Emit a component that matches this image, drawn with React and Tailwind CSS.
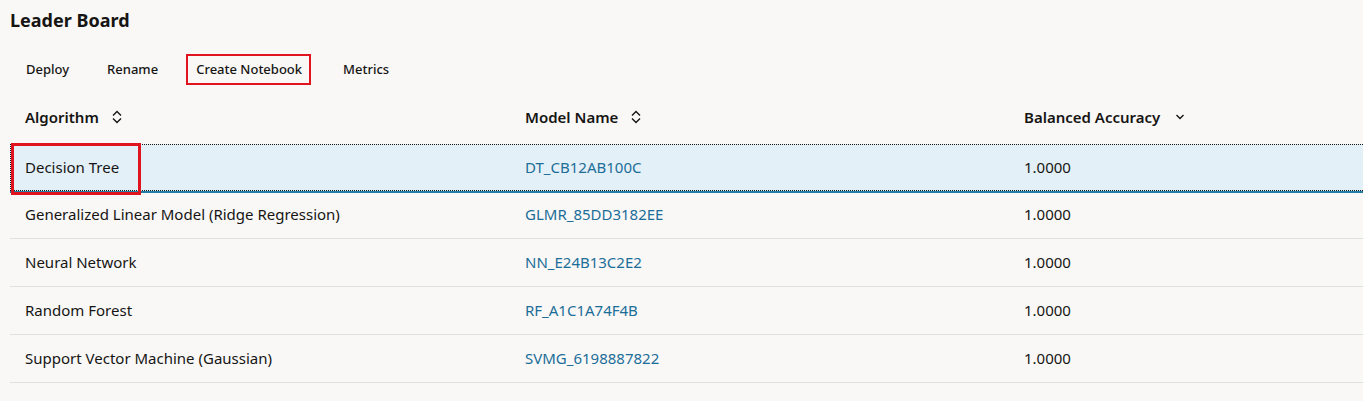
import React from "react";

const rows = [
  ["Decision Tree", "DT_CB12AB100C", "1.0000"],
  ["Generalized Linear Model (Ridge Regression)", "GLMR_85DD3182EE", "1.0000"],
  ["Neural Network", "NN_E24B13C2E2", "1.0000"],
  ["Random Forest", "RF_A1C1A74F4B", "1.0000"],
  ["Support Vector Machine (Gaussian)", "SVMG_6198887822", "1.0000"],
];

function UpDown() {
  return (
    <svg width="12" height="14" viewBox="0 0 12 14" fill="none" stroke="#161513" strokeWidth="1.4">
      <path d="M2 5.5 L6 1.5 L10 5.5" />
      <path d="M2 8.5 L6 12.5 L10 8.5" />
    </svg>
  );
}

function Down() {
  return (
    <svg width="12" height="8" viewBox="0 0 12 8" fill="none" stroke="#161513" strokeWidth="1.4">
      <path d="M2.5 2 L6 5.5 L9.5 2" />
    </svg>
  );
}

export default function App() {
  return (
    <div
      className="w-[1363px] h-[401px] bg-[#f9f8f7] text-[#161513] overflow-hidden"
      style={{ fontFamily: '"Noto Sans", "Open Sans", sans-serif' }}
    >
      <h1 className="pl-[10px] pt-[8px] h-[46px] text-[18px] font-bold leading-[24px]">Leader Board</h1>
      <div className="flex items-center h-[47px] pl-[10px] text-[13px] font-medium">
        <button className="px-[16px] h-[30px]">Deploy</button>
        <button className="ml-[6px] px-[16px] h-[30px]">Rename</button>
        <button className="ml-[12px] pl-[8px] pr-[7px] h-[31px] border-[2px] border-[#e0141e]">Create Notebook</button>
        <button className="ml-[16px] px-[16px] h-[30px]">Metrics</button>
      </div>
      <div className="ml-[10px] text-[15px]">
        <div className="flex h-[51px] items-center font-semibold pb-[3px]">
          <div className="w-[500px] pl-[15px] flex items-center gap-[12px]">Algorithm <UpDown /></div>
          <div className="w-[499px] pl-[15px] flex items-center gap-[12px]">Model Name <UpDown /></div>
          <div className="flex-1 pl-[15px] flex items-center gap-[14px]">Balanced Accuracy <Down /></div>
        </div>
        {rows.map((r, i) => (
          <div
            key={i}
            className={
              i === 0
                ? "relative flex h-[47px] items-center bg-[#e4f0f7] border-t border-b border-l border-dotted border-[#161513] shadow-[0_2px_0_#227fa8]"
                : "flex h-[48px] items-center border-b border-[#e0e0df]"
            }
          >
            {i === 0 && (
              <div className="absolute left-[0px] top-[-2px] w-[130px] h-[52px] border-[3px] border-[#e0141e]" />
            )}
            <div className={i === 0 ? "w-[499px] pl-[14px]" : "w-[500px] pl-[15px]"}>{r[0]}</div>
            <div className="w-[499px] pl-[15px] text-[#1c6e98]">{r[1]}</div>
            <div className="flex-1 pl-[15px]">{r[2]}</div>
          </div>
        ))}
      </div>
    </div>
  );
}
